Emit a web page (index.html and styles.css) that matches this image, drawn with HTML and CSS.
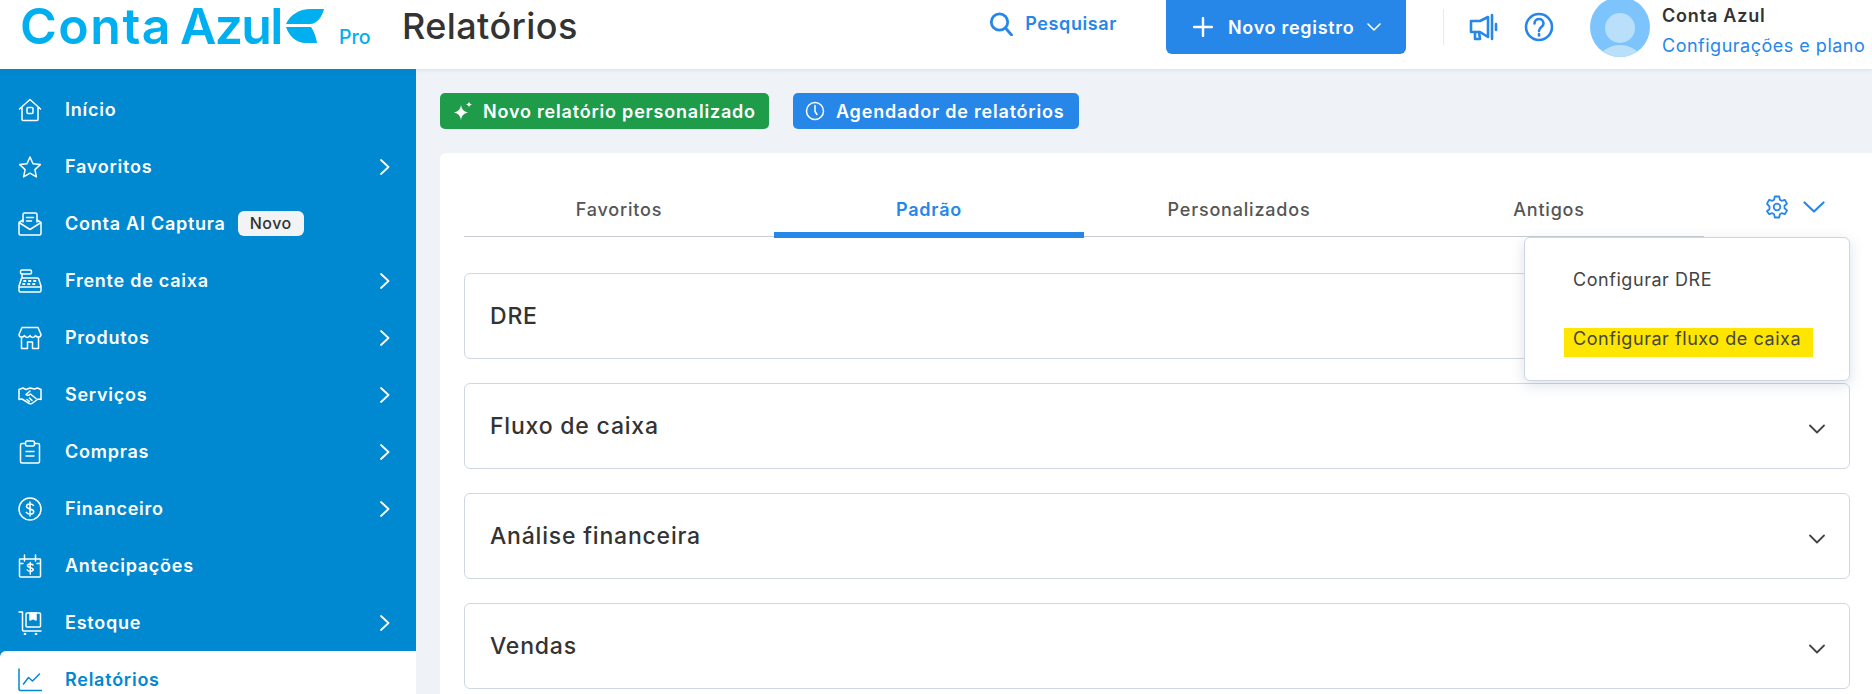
FILE: index.html
```html
<!DOCTYPE html>
<html lang="pt-BR">
<head>
<meta charset="utf-8">
<title>Relatórios</title>
<link rel="stylesheet" href="styles.css">
</head>
<body>
<header class="topbar">
  <div class="brand">
    <span class="brand-name"><span class="brand-first">Conta</span><span class="brand-second">Azul</span></span>
    <svg class="brand-mark" viewBox="0 0 38 34"><path d="M38 0H25C13 0 4 6 0 15H24C31 15 36 8 38 0Z"/><path d="M0 18H25C28 22 30 28 31 34H20C10 34 3 27 0 18Z"/></svg>
    <span class="brand-plan">Pro</span>
  </div>
  <h1 class="page-title">Relatórios</h1>
  <div class="top-actions">
    <a class="search">
      <svg class="ico-search" viewBox="0 0 24 24"><circle cx="10.5" cy="10" r="8.2"/><path d="M16.5 16l6 7"/></svg>
      <span>Pesquisar</span>
    </a>
    <button class="new-record">
      <svg class="ico-plus" viewBox="0 0 20 20"><path d="M10 1v18M1 10h18"/></svg>
      <span>Novo registro</span>
      <svg class="ico-small-chev" viewBox="0 0 14 8"><path d="M1 1l6 6 6-6"/></svg>
    </button>
    <span class="divider"></span>
    <svg class="ico-mega" viewBox="0 0 30 30"><path d="M19 5v20L11 20H2V9h9z"/><path d="M6 20v7h5l-1-7"/><path d="M23 3v24M27 12v6"/></svg>
    <svg class="ico-help" viewBox="0 0 30 30"><circle cx="15" cy="15" r="13"/><path d="M10.5 11.5c0-6 9-6 9 0 0 3.500-4.500 3.500-4.500 7.500"/><path d="M15 22v1.500"/></svg>
    <div class="avatar"><span class="avatar-head"></span><span class="avatar-body"></span></div>
    <div class="user">
      <strong>Conta Azul</strong>
      <a>Configurações e plano</a>
    </div>
  </div>
</header>

<div class="shell">
  <nav class="sidebar">
    <a class="nav-item">
      <svg class="nav-ico" viewBox="0 0 24 24"><path d="M1.500 11L12 1.500 22.500 11M4 9v12.500a1 1 0 0 0 1 1h14a1 1 0 0 0 1-1V9"/><rect x="9" y="9.500" width="6" height="6" rx="1"/></svg>
      <span>Início</span>
    </a>
    <a class="nav-item">
      <svg class="nav-ico" viewBox="0 0 24 24"><path d="M12 2l3 6.800 7.300.8-5.400 5 1.500 7.300L12 18.200l-6.400 3.700 1.500-7.300-5.400-5 7.300-.8z"/></svg>
      <span>Favoritos</span>
      <svg class="nav-chev" viewBox="0 0 10 16"><path d="M1 1l7.500 7L1 15"/></svg>
    </a>
    <a class="nav-item">
      <svg class="nav-ico" viewBox="0 0 24 24"><path d="M5 10V2.500a1.500 1.500 0 0 1 1.500-1.500h11A1.500 1.500 0 0 1 19 2.500V10M8.500 5.500h7M8.500 9h5"/><path d="M1 10.500l11 7 11-7v11a1.500 1.500 0 0 1-1.500 1.500h-19A1.500 1.500 0 0 1 1 21.500zM1 10.500L5 8M23 10.500L19 8"/></svg>
      <span>Conta AI Captura</span>
      <span class="nav-badge">Novo</span>
    </a>
    <a class="nav-item">
      <svg class="nav-ico" viewBox="0 0 24 24"><rect x="2.500" y="1" width="11" height="4" rx="1.500"/><path d="M4 5v4M6 9h13a2 2 0 0 1 2 2l2 6v4.500a1.500 1.500 0 0 1-1.500 1.500h-19A1.500 1.500 0 0 1 1 21.500V17l2-6a2 2 0 0 1 2-2zM1 18h22"/><path class="dots" d="M6 12h1.500M11 12h1.500M16 12h1.500M5 15h1.500M10 15h1.500M15 15h1.500"/></svg>
      <span>Frente de caixa</span>
      <svg class="nav-chev" viewBox="0 0 10 16"><path d="M1 1l7.500 7L1 15"/></svg>
    </a>
    <a class="nav-item">
      <svg class="nav-ico" viewBox="0 0 24 24"><path d="M4 1.500h16l3 7c0 3-4 3.500-5.500 1-1 2.500-4.500 2.500-5.500 0-1 2.500-4.500 2.500-5.500 0C5 12 1 11.500 1 8.500zM3.500 12v10.500h6V16h5v6.500h6V12"/></svg>
      <span>Produtos</span>
      <svg class="nav-chev" viewBox="0 0 10 16"><path d="M1 1l7.500 7L1 15"/></svg>
    </a>
    <a class="nav-item">
      <svg class="nav-ico" viewBox="0 0 24 24"><path d="M1 6.500l4-1.500 3 1.500L12 5l4.500 1 3-1L23 6.500v10l-3-.5-6 4.500c-1.500 1-2.500 0-3.500-.5L4 16l-3 .5z"/><path d="M12 8l-4 3.500c1.500 1.500 3 1 4.500-.5l5.500 4.500M9 16.500l2.500 2M11.500 15l2.500 2.500"/></svg>
      <span>Serviços</span>
      <svg class="nav-chev" viewBox="0 0 10 16"><path d="M1 1l7.500 7L1 15"/></svg>
    </a>
    <a class="nav-item">
      <svg class="nav-ico" viewBox="0 0 24 24"><path d="M7.500 3.500H4a1.500 1.500 0 0 0-1.500 1.500v16.500A1.500 1.500 0 0 0 4 23h16a1.500 1.500 0 0 0 1.500-1.500V5A1.500 1.500 0 0 0 20 3.500h-3.500"/><rect x="7.500" y="1" width="9" height="5" rx="1.500"/><path d="M8 11.500h8M8 16h8"/></svg>
      <span>Compras</span>
      <svg class="nav-chev" viewBox="0 0 10 16"><path d="M1 1l7.500 7L1 15"/></svg>
    </a>
    <a class="nav-item">
      <svg class="nav-ico" viewBox="0 0 24 24"><circle cx="12" cy="12" r="11"/><path d="M15.500 8.500c-1-2-7-2.500-7 .8 0 3.700 7.200 1.700 7.200 5.400 0 3.300-6.200 2.800-7.400.6M12 5v14"/></svg>
      <span>Financeiro</span>
      <svg class="nav-chev" viewBox="0 0 10 16"><path d="M1 1l7.500 7L1 15"/></svg>
    </a>
    <a class="nav-item">
      <svg class="nav-ico" viewBox="0 0 24 24"><path d="M2 5h20a.5.500 0 0 1 .5.500V22a1 1 0 0 1-1 1h-19a1 1 0 0 1-1-1V5.500A.5.500 0 0 1 2 5zM6.500 1v6M17.500 1v6M2 9.500h3M19 9.500h3"/><path d="M15 11c-.8-1.300-5.500-1.700-5.500.6 0 2.800 5.700 1.300 5.700 4 0 2.400-5 2-5.900.4M12.300 8.500V20"/></svg>
      <span>Antecipações</span>
    </a>
    <a class="nav-item">
      <svg class="nav-ico" viewBox="0 0 24 24"><path d="M1 1h3.500v18a1 1 0 0 0 1 1H23"/><rect x="8" y="2" width="14.500" height="14" rx="1"/><path class="solid" d="M12 2h6v7l-3-1.500L12 9z"/><circle cx="7" cy="23" r=".6"/><circle cx="18" cy="23" r=".6"/></svg>
      <span>Estoque</span>
      <svg class="nav-chev" viewBox="0 0 10 16"><path d="M1 1l7.500 7L1 15"/></svg>
    </a>
    <a class="nav-item active">
      <svg class="nav-ico" viewBox="0 0 24 24"><path d="M1 1v20a1.500 1.500 0 0 0 1.500 1.500H23.500"/><path d="M5.500 16l5-6.500 4 3.500 7-7"/></svg>
      <span>Relatórios</span>
    </a>
  </nav>

  <main class="content">
    <div class="quick-actions">
      <button class="pill pill-green">
        <svg class="pill-ico-spark" viewBox="0 0 20 20"><path d="M8 4c.8 4.500 2.500 6.300 7 7.500-4.500 1.200-6.200 3-7 7.500-.8-4.500-2.500-6.300-7-7.500C5.500 10.300 7.200 8.500 8 4z"/><path d="M16 .5c.3 1.800 1 2.500 3 3-2 .5-2.700 1.200-3 3-.3-1.800-1-2.500-3-3 2-.5 2.700-1.200 3-3z"/></svg>
        <span>Novo relatório personalizado</span>
      </button>
      <button class="pill pill-blue">
        <svg class="pill-ico-clock" viewBox="0 0 20 20"><circle cx="10" cy="10" r="8.500"/><path d="M10 4.500v6l2 3"/></svg>
        <span>Agendador de relatórios</span>
      </button>
    </div>

    <section class="card">
      <div class="tabs-row">
        <div class="tabs">
          <a class="tab">Favoritos</a>
          <a class="tab current">Padrão</a>
          <a class="tab">Personalizados</a>
          <a class="tab">Antigos</a>
        </div>
        <div class="tab-tools">
          <svg class="ico-gear" viewBox="0 0 24 24"><circle cx="12" cy="12" r="3.300"/><path d="M9.800 1.500h4.400l.7 3.300 1.700 1 3.200-1 2.200 3.800-2.500 2.200v2.400l2.500 2.200-2.200 3.800-3.200-1-1.700 1-.7 3.300H9.800l-.7-3.300-1.700-1-3.200 1L2 16.200l2.500-2.200v-2.400L2 8.600l2.200-3.800 3.200 1 1.700-1z" /></svg>
          <svg class="ico-tool-chev" viewBox="0 0 22 12"><path d="M1.500 1.500l9.500 9 9.500-9"/></svg>
        </div>
        <div class="menu">
          <a class="menu-item">Configurar DRE</a>
          <a class="menu-item marked">Configurar fluxo de caixa</a>
        </div>
      </div>

      <div class="accordions">
        <div class="acc"><span>DRE</span><svg class="acc-chev" viewBox="0 0 16 10"><path d="M1 1.500l7 7 7-7"/></svg></div>
        <div class="acc"><span>Fluxo de caixa</span><svg class="acc-chev" viewBox="0 0 16 10"><path d="M1 1.500l7 7 7-7"/></svg></div>
        <div class="acc"><span>Análise financeira</span><svg class="acc-chev" viewBox="0 0 16 10"><path d="M1 1.500l7 7 7-7"/></svg></div>
        <div class="acc"><span>Vendas</span><svg class="acc-chev" viewBox="0 0 16 10"><path d="M1 1.500l7 7 7-7"/></svg></div>
      </div>
    </section>
  </main>
</div>
</body>
</html>
```
FILE: styles.css
```css
* { box-sizing: border-box; }
html, body { margin: 0; height: 694px; overflow: hidden; }
body { font-family: Inter, "Noto Sans", sans-serif; color: #333; background: #eff3f8; }
svg { display: block; flex: none; fill: none; stroke: currentColor; stroke-linecap: round; stroke-linejoin: round; }
button { font: inherit; border: 0; color: #fff; }

/* top bar */
.topbar { position: relative; z-index: 2; height: 69px; background: #fff; display: flex; align-items: flex-start; box-shadow: 0 1px 4px rgba(60, 80, 110, .12); }
.brand { display: flex; align-items: flex-start; width: 402px; padding-left: 20px; color: #00aff0; }
.brand-name { display: flex; gap: 8px; font-size: 50px; line-height: 52px; font-weight: 600; width: 266px; white-space: nowrap; }
.brand-first { letter-spacing: 1.5px; }
.brand-second { letter-spacing: -1.7px; }
.brand-mark { width: 38px; height: 34px; margin-top: 9px; fill: #00aff0; stroke: none; }
.brand-plan { font-size: 19.500px; font-weight: 500; line-height: 22px; margin: 26px 0 0 15px; }
.page-title { margin: 0; font-size: 36px; line-height: 52px; font-weight: 500; color: #333; letter-spacing: .4px; }
.top-actions { margin-left: auto; display: flex; align-items: flex-start; }
.search { display: flex; align-items: center; gap: 12px; margin-top: 12px; color: #2687e9; font-size: 18px; letter-spacing: .6px; font-weight: 600; line-height: 24px; }
.ico-search { width: 24px; height: 24px; stroke-width: 2.800; }
.new-record { height: 54px; width: 240px; margin-left: 49px; background: #2687e9; border-radius: 0 0 6px 6px; display: flex; align-items: center; padding: 0 0 0 27px; font-size: 18px; letter-spacing: .7px; font-weight: 600; }
.ico-plus { width: 20px; height: 20px; stroke-width: 2.400; margin-right: 15px; }
.ico-small-chev { width: 14px; height: 8px; stroke-width: 1.600; margin-left: 13px; }
.divider { width: 1px; height: 36px; margin: 9px 25px 0 37px; background: #e6eaf0; }
.ico-mega { width: 30px; height: 30px; margin-top: 12px; color: #2687e9; stroke-width: 2.600; }
.ico-help { width: 30px; height: 30px; margin: 12px 0 0 25px; color: #2687e9; stroke-width: 2.600; }
.avatar { position: relative; width: 60px; height: 60px; margin: -3px 12px 0 36px; border-radius: 50%; background: #7cc4fb; overflow: hidden; }
.avatar-head { position: absolute; left: 15px; top: 16px; width: 30px; height: 30px; border-radius: 50%; background: #b9dffb; }
.avatar-body { position: absolute; left: 9px; top: 48px; width: 42px; height: 30px; border-radius: 50%; background: #b9dffb; }
.user { width: 210px; padding-top: 5px; white-space: nowrap; }
.user strong { display: block; font-size: 18px; letter-spacing: .8px; line-height: 22px; font-weight: 600; color: #333; }
.user a { display: block; margin-top: 7px; font-size: 18px; letter-spacing: .5px; line-height: 24px; color: #2687e9; }

/* layout */
.shell { display: flex; height: 625px; }
.sidebar { width: 416px; flex: none; background: #0088d1; display: flex; flex-direction: column; padding-top: 12px; }
.nav-item { display: flex; align-items: center; height: 57px; flex: none; padding: 0 26px 0 18px; color: #fff; font-size: 18px; letter-spacing: .75px; font-weight: 600; }
.nav-ico { width: 24px; height: 24px; margin-right: 23px; stroke-width: 1.500; }
.nav-ico .solid { fill: currentColor; }
.nav-ico .dots { stroke-width: 1.800; }
.nav-chev { width: 10px; height: 16px; margin-left: auto; stroke-width: 1.800; }
.nav-badge { margin-left: 12px; height: 25px; width: 66px; border-radius: 6px; background: #f2f3f4; color: #333; font-size: 16px; letter-spacing: .5px; font-weight: 500; text-align: center; line-height: 25px; }
.nav-item.active { background: #fff; color: #0088d1; border-top-left-radius: 6px; }

/* content */
.content { flex: 1; min-width: 0; padding: 24px 0 0 24px; }
.quick-actions { display: flex; gap: 24px; }
.pill { height: 36px; border-radius: 5px; display: flex; align-items: center; font-size: 18px; letter-spacing: .8px; font-weight: 600; }
.pill-green { width: 329px; background: #1e9c4a; padding-left: 13px; }
.pill-blue { width: 286px; background: #2687e9; padding-left: 12px; }
.pill-ico-spark { width: 20px; height: 20px; margin-right: 10px; fill: #fff; stroke: none; }
.pill-ico-clock { width: 20px; height: 20px; margin-right: 11px; stroke-width: 1.500; }

.card { margin-top: 24px; height: 560px; background: #fff; border-radius: 6px 0 0 0; padding: 30px 22px 0 24px; }
.tabs-row { position: relative; display: flex; }
.tabs { display: flex; width: 1240px; border-bottom: 1px solid #c9cdd3; height: 54px; }
.tab { width: 310px; text-align: center; font-size: 18px; letter-spacing: .8px; font-weight: 500; line-height: 53px; color: #555; position: relative; }
.tab.current { color: #2687e9; font-weight: 600; }
.tab.current::after { content: ""; position: absolute; left: 0; right: 0; bottom: -2px; height: 6px; background: #2687e9; }
.tab-tools { display: flex; align-items: center; height: 23px; margin: 12px 0 0 61px; color: #2687e9; }
.ico-gear { width: 24px; height: 24px; stroke-width: 1.800; }
.ico-tool-chev { width: 22px; height: 12px; margin-left: 14px; stroke-width: 2.200; }
.menu { position: absolute; z-index: 3; top: 54px; right: 0; width: 326px; height: 144px; background: #fff; border: 1px solid #ccd6e4; border-radius: 6px; box-shadow: 0 4px 14px rgba(70, 90, 120, .18); padding: 27px 0 0 39px; }
.menu-item { display: block; width: 249px; height: 29px; font-size: 18px; letter-spacing: .55px; line-height: 29px; color: #444; padding-left: 9px; white-space: nowrap; }
.menu-item.marked { margin-top: 34px; background: #ffe600; line-height: 22px; height: 29px; }

.accordions { margin-top: 36px; display: flex; flex-direction: column; gap: 24px; }
.acc { height: 86px; border: 1px solid #cfd7e3; border-radius: 6px; display: flex; align-items: center; justify-content: space-between; padding: 0 24px 0 25px; font-size: 23px; letter-spacing: .8px; font-weight: 500; color: #333; }
.acc-chev { width: 16px; height: 10px; margin-top: 5px; color: #444; stroke-width: 1.800; }
```
